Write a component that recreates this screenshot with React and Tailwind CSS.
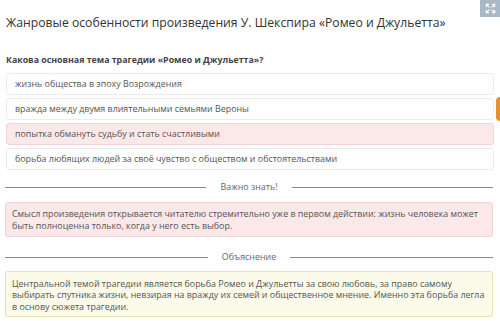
import React from 'react';
import { Expand } from 'lucide-react';

const options = [
    { text: 'жизнь общества в эпоху Возрождения' },
    { text: 'вражда между двумя влиятельными семьями Вероны' },
    { text: 'попытка обмануть судьбу и стать счастливыми', wrong: true },
    { text: 'борьба любящих людей за своё чувство с обществом и обстоятельствами' },
];

const Divider = ({ label }) => (
    <div className="flex items-center gap-[14px] px-[5px]">
        <div className="h-px flex-1 bg-[#8a8a8a]" />
        <span className="text-[8.9px] leading-[12px] text-[#666]">{label}</span>
        <div className="h-px flex-1 bg-[#8a8a8a]" />
    </div>
);

const App = () => {
    return (
        <div className="relative w-[500px] h-[321px] overflow-hidden bg-white font-['Open_Sans',sans-serif] text-[#555]">
            <div className="absolute right-0 top-0 flex h-[17px] w-[20px] items-center justify-center bg-[#a9b7c6]">
                <Expand className="h-[11px] w-[11px] text-white" strokeWidth={2.5} />
            </div>
            <div className="absolute right-0 top-[97px] h-[24px] w-[4px] rounded-l-sm bg-[#e8902c]" />

            <div className="flex flex-col pt-[15px]">
                <h1 className="px-[6px] text-[12.2px] leading-[16px] text-[#333]">
                    Жанровые особенности произведения У. Шекспира «Ромео и Джульетта»
                </h1>
                <p className="mt-[23px] px-[6px] text-[8.8px] font-bold leading-[12px] text-[#444]">
                    Какова основная тема трагедии «Ромео и Джульетта»?
                </p>

                <div className="mt-[7px] flex w-[494px] flex-col gap-[3px] pl-[6px]">
                    {options.map((o) => (
                        <div
                            key={o.text}
                            className={`flex h-[22px] items-center rounded-[3px] border px-[8px] text-[8.9px] ${
                                o.wrong ? 'border-[#f3d3d5] bg-[#fbe8e9]' : 'border-[#ececec] bg-white'
                            }`}
                        >
                            {o.text}
                        </div>
                    ))}
                </div>

                <div className="mt-[11px] w-[498px]">
                    <Divider label="Важно знать!" />
                </div>

                <div className="mx-[5px] mt-[9px] w-[488px] rounded-[3px] border border-[#f2d2d4] bg-[#fbe8e9] px-[6px] py-[4.5px] text-[8.9px] leading-[12px]">
                    Смысл произведения открывается читателю стремительно уже в первом действии: жизнь человека может быть полноценна только, когда у него есть выбор.
                </div>

                <div className="mt-[14px] w-[498px]">
                    <Divider label="Объяснение" />
                </div>

                <div className="mx-[5px] mt-[8px] w-[488px] rounded-[3px] border border-[#e9e2b0] bg-[#fcfae8] px-[6px] pb-[3.5px] pt-[5.5px] text-[8.9px] leading-[11.5px]">
                    Центральной темой трагедии является борьба Ромео и Джульетты за свою любовь, за право самому выбирать спутника жизни, невзирая на вражду их семей и общественное мнение. Именно эта борьба легла в основу сюжета трагедии.
                </div>
            </div>
        </div>
    );
};

export default App;
